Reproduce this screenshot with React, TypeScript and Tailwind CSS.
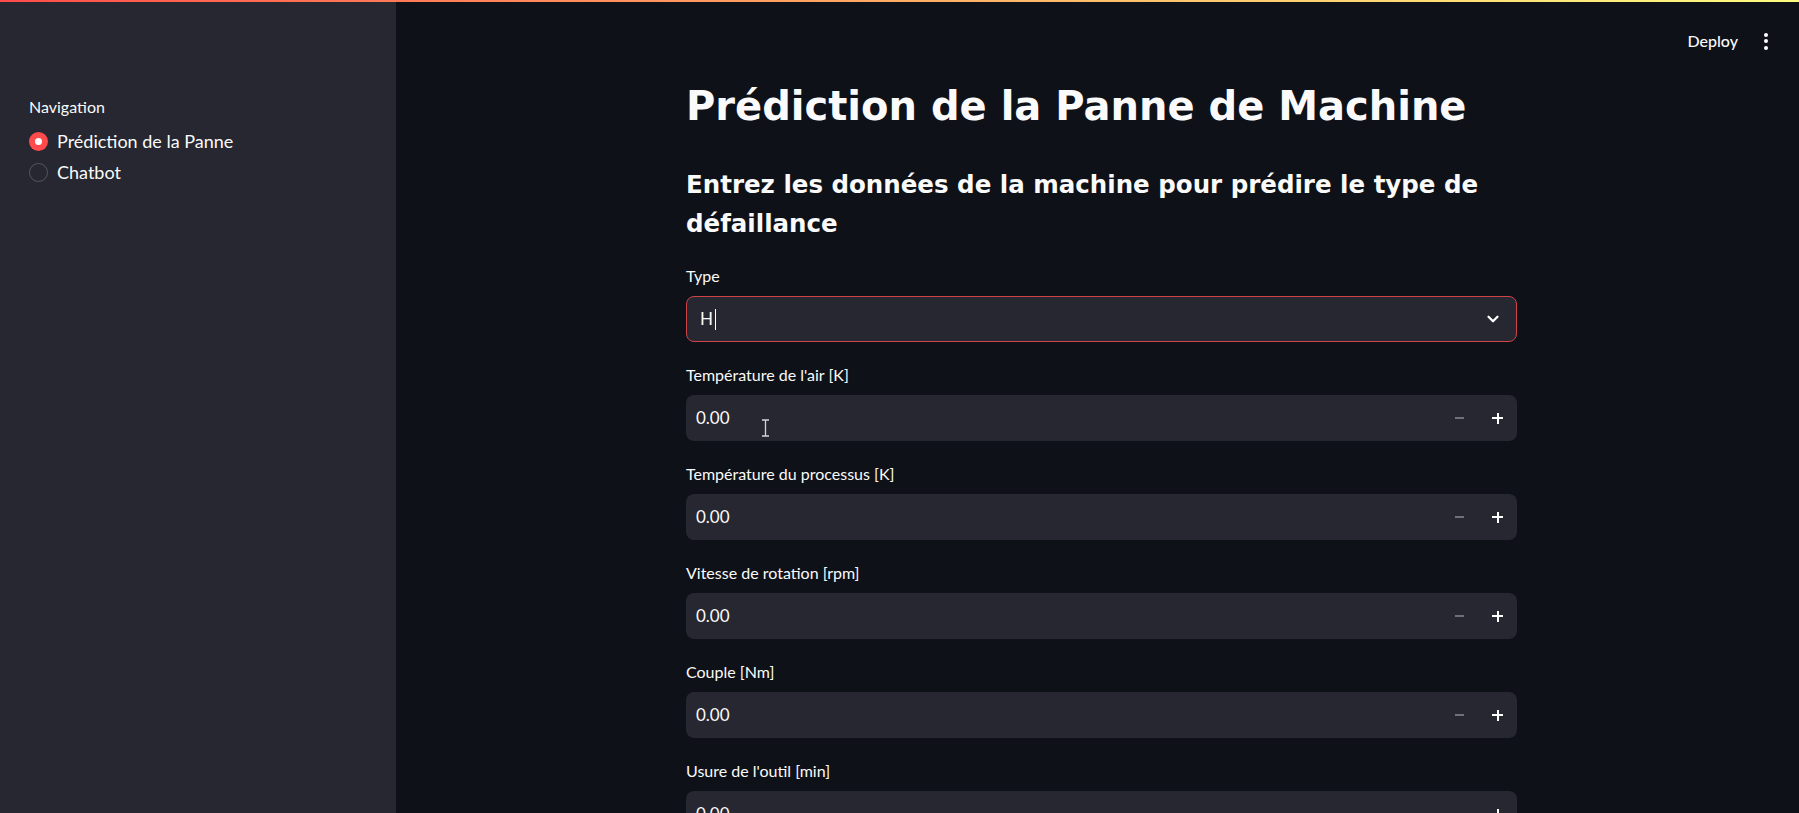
import { ChevronDown } from "lucide-react";

const fields = [
  "Température de l'air [K]",
  "Température du processus [K]",
  "Vitesse de rotation [rpm]",
  "Couple [Nm]",
  "Usure de l'outil [min]",
];

function Sidebar() {
  return (
    <aside className="w-[396px] shrink-0 bg-[#262730] pt-[97px] pl-[29px]">
      <div className="text-[16px] leading-[20px] text-[#fafafa]">Navigation</div>
      <div className="mt-[9px] flex flex-col">
        <label className="flex h-[31px] items-center gap-[9px]">
          <span className="flex h-[19px] w-[19px] items-center justify-center rounded-full bg-[#ff4b4b]">
            <span className="h-[7px] w-[7px] rounded-full bg-white" />
          </span>
          <span className="text-[18px] text-[#fafafa]">Prédiction de la Panne</span>
        </label>
        <label className="flex h-[31px] items-center gap-[9px]">
          <span className="h-[19px] w-[19px] rounded-full border border-[#55575f]" />
          <span className="text-[18px] text-[#fafafa]">Chatbot</span>
        </label>
      </div>
    </aside>
  );
}

function NumberField({ label }: { label: string }) {
  return (
    <div className="mt-[23px]">
      <div className="text-[16px] leading-[20px] text-[#fafafa]">{label}</div>
      <div className="mt-[10px] flex h-[46px] items-center rounded-lg bg-[#262730] pl-[10px] pr-[14px]">
        <span className="flex-1 text-[17px] text-[#fafafa]">0.00</span>
        <span className="mr-[28px] h-[2px] w-[9px] bg-[#6f717a]" />
        <span className="relative h-[11px] w-[11px]">
          <span className="absolute left-0 top-[4.5px] h-[2px] w-[11px] bg-white" />
          <span className="absolute left-[4.5px] top-0 h-[11px] w-[2px] bg-white" />
        </span>
      </div>
    </div>
  );
}

export default function App() {
  return (
    <div
      className="relative flex h-[813px] w-full overflow-hidden bg-[#0e1117] text-[#fafafa]"
      style={{ fontFamily: "Lato, 'Open Sans', sans-serif" }}
    >
      <div className="absolute inset-x-0 top-0 z-10 h-[2px] bg-gradient-to-r from-[#ff4b4b] to-[#fffd80]" />
      <Sidebar />
      <main className="relative flex-1 pl-[8px]">
        <header className="absolute right-[31px] top-[29px] flex items-center gap-[26px]">
          <span className="text-[16px] leading-[24px] font-medium">Deploy</span>
          <span className="flex flex-col gap-[2.5px]">
            <span className="h-[4px] w-[4px] rounded-full bg-white" />
            <span className="h-[4px] w-[4px] rounded-full bg-white" />
            <span className="h-[4px] w-[4px] rounded-full bg-white" />
          </span>
        </header>
        <div className="mx-auto w-[831px] pt-[80px]">
          <h1 className="font-['DejaVu_Sans',sans-serif] text-[40px] font-bold leading-[53px]">
            Prédiction de la Panne de Machine
          </h1>
          <h3 className="mt-[32px] font-['DejaVu_Sans',sans-serif] text-[24.5px] font-bold leading-[39px]">
            Entrez les données de la machine pour prédire le type de défaillance
          </h3>
          <div className="mt-[23px]">
            <div className="text-[16px] leading-[20px]">Type</div>
            <div className="mt-[10px] flex h-[46px] items-center rounded-lg border border-[#cf4449] bg-[#262730] pl-[13px] pr-[14px]">
              <span className="text-[17px]">H</span>
              <span className="ml-[2px] h-[21px] w-[1px] bg-white" />
              <span className="flex-1" />
              <ChevronDown className="h-[18px] w-[18px] text-white" strokeWidth={3} />
            </div>
          </div>
          {fields.map((f) => (
            <NumberField key={f} label={f} />
          ))}
        </div>
        <svg className="absolute left-[365px] top-[419px]" width="9" height="18" viewBox="0 0 9 18">
          <path d="M1 1h7M1 17h7M4.5 1v16" stroke="#d4d4d8" strokeWidth="1.3" fill="none" />
        </svg>
      </main>
    </div>
  );
}
